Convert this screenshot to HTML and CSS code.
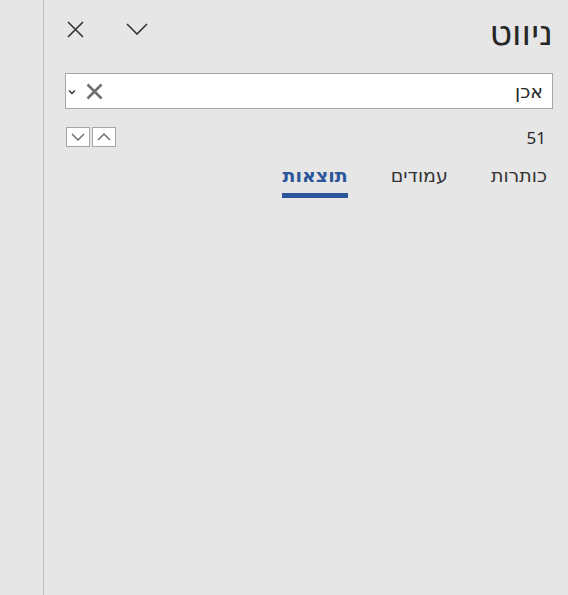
FILE: index.html
```html
<!DOCTYPE html>
<html lang="he">
<head>
<meta charset="utf-8">
<link rel="stylesheet" href="styles.css">
</head>
<body>
<div class="app">
  <div class="rail"></div>
  <div class="pane" dir="rtl">
    <div class="header">
      <h1 class="title">ניווט</h1>
      <div class="header-tools">
        <button class="icon-btn chevron-btn" aria-label="אפשרויות">
          <svg width="22" height="12" viewBox="0 0 22 12"><path d="M1 1 L11 11 L21 1" fill="none" stroke="#333" stroke-width="1.6"/></svg>
        </button>
        <button class="icon-btn close-btn" aria-label="סגור">
          <svg width="17" height="17" viewBox="0 0 17 17"><path d="M1 1 L16 16 M16 1 L1 16" fill="none" stroke="#333" stroke-width="1.6"/></svg>
        </button>
      </div>
    </div>
    <div class="search">
      <span class="search-text">אכן</span>
      <div class="search-tools">
        <svg class="clear" width="17" height="17" viewBox="0 0 17 17"><path d="M1.5 1.5 L15.5 15.5 M15.5 1.5 L1.5 15.5" fill="none" stroke="#707070" stroke-width="2.6"/></svg>
        <svg class="drop" width="8" height="6" viewBox="0 0 8 6"><path d="M1 1.5 L4 4.5 L7 1.5" fill="none" stroke="#333" stroke-width="1.4"/></svg>
      </div>
    </div>
    <div class="results-row">
      <span class="count">51</span>
      <div class="nav-btns">
        <button class="nav-btn" aria-label="הקודם"><svg width="14" height="8" viewBox="0 0 14 8"><path d="M1 7 L7 1 L13 7" fill="none" stroke="#707070" stroke-width="1.5"/></svg></button>
        <button class="nav-btn" aria-label="הבא"><svg width="14" height="8" viewBox="0 0 14 8"><path d="M1 1 L7 7 L13 1" fill="none" stroke="#707070" stroke-width="1.5"/></svg></button>
      </div>
    </div>
    <div class="tabs">
      <div class="tab">כותרות</div>
      <div class="tab">עמודים</div>
      <div class="tab active">תוצאות</div>
    </div>
  </div>
</div>
</body>
</html>
```
FILE: styles.css
```css
html, body {
  margin: 0;
  padding: 0;
  height: 100%;
  background: #e6e6e6;
  font-family: "Segoe UI", "Noto Sans", "DejaVu Sans", sans-serif;
  color: #262626;
}
.app {
  display: flex;
  height: 595px;
}
.rail {
  width: 43px;
  border-right: 1px solid #bdbdbd;
  flex: none;
}
.pane {
  flex: 1;
  padding: 0 15px 0 21px;
}
.header {
  display: flex;
  justify-content: space-between;
  align-items: flex-start;
  height: 73px;
}
.title {
  margin: 10px 0 0 0;
  font-size: 35px;
  font-weight: normal;
  line-height: 44px;
  color: #262626;
}
.header-tools {
  display: flex;
  align-items: center;
  gap: 40px;
  margin-top: 20px;
  margin-left: -1px;
}
.icon-btn {
  border: none;
  background: none;
  padding: 0;
  display: flex;
  align-items: center;
  justify-content: center;
  width: 22px;
  height: 18px;
}
.search {
  height: 34px;
  background: #fff;
  border: 1px solid #a6a6a6;
  display: flex;
  align-items: center;
  justify-content: space-between;
  padding: 0 9px 0 2px;
}
.search-text {
  font-size: 19px;
  color: #262626;
}
.search-tools {
  display: flex;
  align-items: center;
  gap: 10px;
}
.search-tools .drop {
  margin-top: 2px;
}
.results-row {
  display: flex;
  justify-content: space-between;
  align-items: center;
  margin-top: 17px;
  height: 22px;
}
.count {
  font-size: 17px;
  margin-right: 7px;
}
.nav-btns {
  display: flex;
  gap: 2px;
  margin-left: 1px;
}
.nav-btn {
  width: 24px;
  height: 20px;
  padding: 0;
  background: #fff;
  border: 1px solid #a6a6a6;
  display: flex;
  align-items: center;
  justify-content: center;
}
.tabs {
  display: flex;
  gap: 43px;
  margin-top: 14px;
  padding-right: 6px;
}
.tab {
  font-size: 19px;
  line-height: 26px;
  padding-bottom: 5px;
  border-bottom: 5px solid transparent;
  color: #333;
}
.tab.active {
  font-weight: bold;
  color: #2b579a;
  border-bottom-color: #2b579a;
}
```
